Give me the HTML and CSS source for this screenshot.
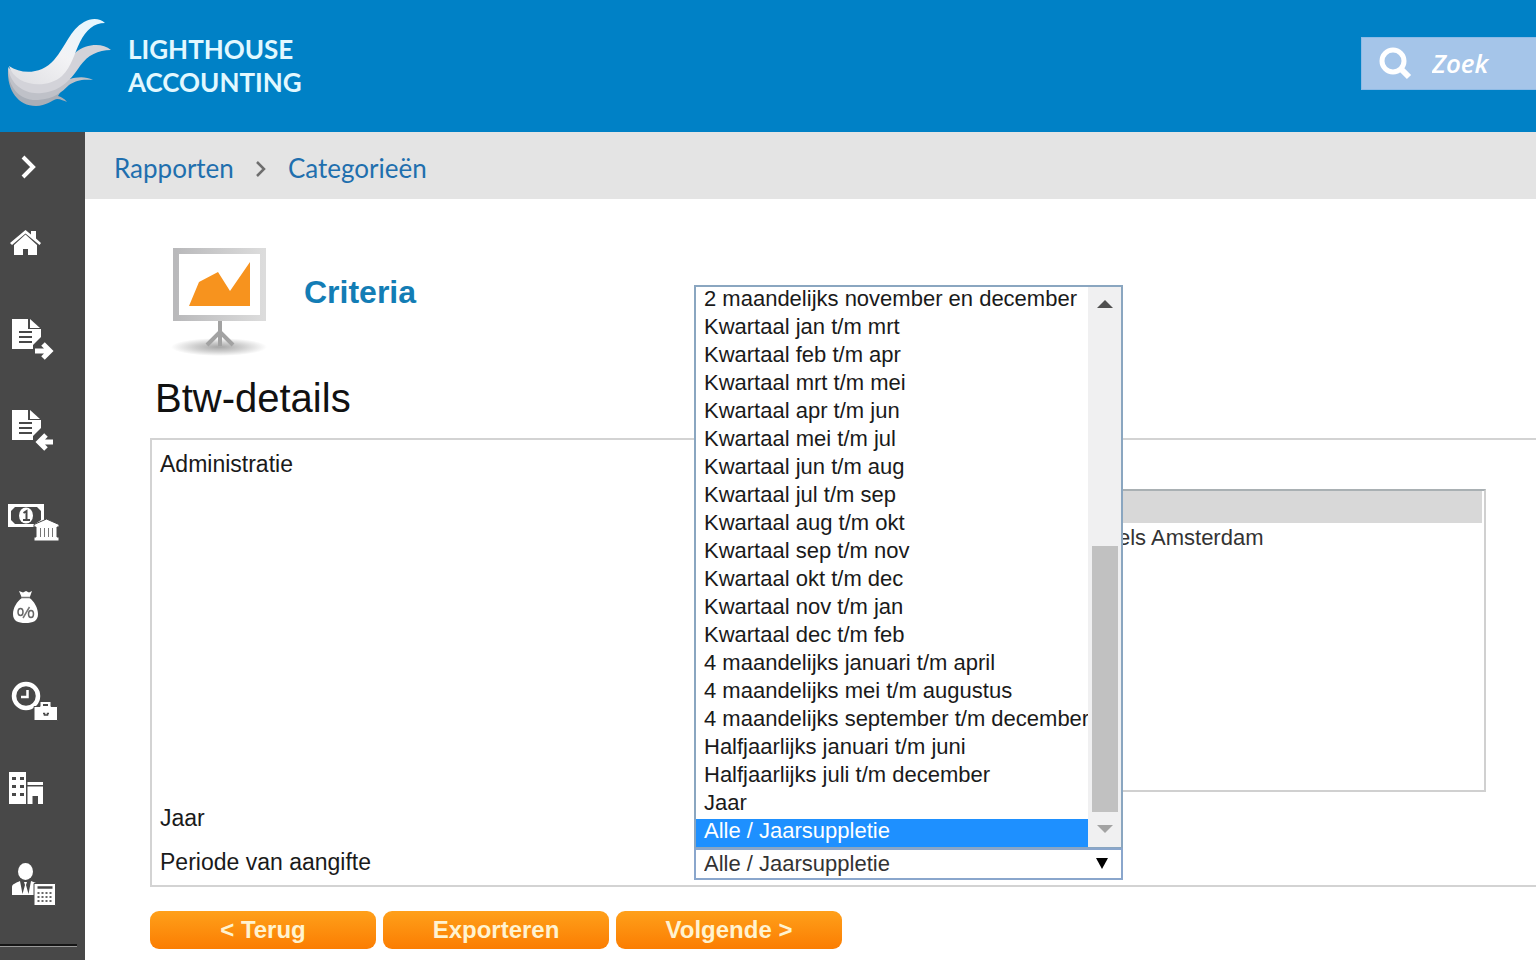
FILE: index.html
```html
<!DOCTYPE html>
<html lang="nl">

<head>
    <meta charset="UTF-8" />
    <meta name="viewport" content="width=device-width, initial-scale=1.0" />
    <title>Lighthouse Accounting - Btw-details</title>
    <link rel="stylesheet" href="styles.css">
</head>

<body>

    <header class="header">
        <a class="logo" href="#">
            <svg class="logo-img" width="120" height="132" viewBox="0 0 120 132" aria-hidden="true">
                <defs>
                    <linearGradient id="wing" x1="0" y1="1" x2="1" y2="0">
                        <stop offset="0" stop-color="#dedee2" />
                        <stop offset=".5" stop-color="#f3f3f5" />
                        <stop offset="1" stop-color="#e4f6ff" />
                    </linearGradient>
                </defs>
                <path fill="#a9aeb7" d="M8 70C7 90 18 106 36 106C46 106 52 100 57 99C61 99 64 101 67 102C64 98 61 97 58 96L64 86C46 96 20 92 8 70Z" />
                <path fill="#bfc1c8" d="M8 68C8 88 20 101 38 100C54 99 62 92 69 85C76 80 83 79 93 80C86 76 76 77 70 79L66 74C50 90 22 88 8 68Z" />
                <path fill="#d3d3d9" d="M8 67C10 84 24 95 42 93C62 91 72 78 80 66C88 55 98 50 111 50C102 42 86 44 76 52L62 68C46 84 22 82 8 67Z" />
                <path fill="url(#wing)" d="M9 66C22 75 42 74 54 60C66 46 70 30 84 22C91 18 100 18 105 23C94 23 86 30 80 42C74 54 72 66 62 76C46 90 15 86 9 66Z" />
            </svg>
            <span class="logo-text">LIGHTHOUSE<br>ACCOUNTING</span>
        </a>
        <label class="search">
            <svg width="36" height="36" viewBox="0 0 36 36" aria-hidden="true">
                <circle cx="15" cy="15" r="11" fill="none" stroke="#fff" stroke-width="5" />
                <path d="M23 23L31 31" stroke="#fff" stroke-width="6" />
            </svg>
            <input class="search-input" type="search" placeholder="Zoek" aria-label="Zoek">
        </label>
    </header>

    <div class="page">
        <nav class="sidebar">
            <button class="side-toggle" type="button" aria-label="Menu">
                <svg width="60" height="68" viewBox="0 0 60 68">
                    <path d="M23 25L33 35L23 45" fill="none" stroke="#fff" stroke-width="4" />
                </svg>
            </button>
            <a class="side-link" href="#" aria-label="Home">
                <svg width="60" height="91" viewBox="0 0 60 91">
                    <path fill="#fff" d="M10 43L25.500 30L31 34.500V31H36V38.500L41 43L39.500 45L25.500 33.500L12 45Z" />
                    <path fill="#fff" d="M14 45L25.500 34.500L37 45V55H28V49H23V55H14Z" />
                </svg>
            </a>
            <a class="side-link" href="#" aria-label="Verkoop">
                <svg width="60" height="91" viewBox="0 0 60 91">
                    <path fill="#fff" d="M12 28H28V38H41V46L33 54V58H12Z" />
                    <path fill="#fff" d="M30 28L40 37H30Z" />
                    <path d="M19 41H32M19 46H32M19 51H32" stroke="#484848" stroke-width="2" />
                    <path d="M35 60H49M43 53L50 60L43 67" fill="none" stroke="#fff" stroke-width="5" />
                </svg>
            </a>
            <a class="side-link" href="#" aria-label="Inkoop">
                <svg width="60" height="91" viewBox="0 0 60 91">
                    <path fill="#fff" d="M12 28H28V38H41V46L33 54V58H12Z" />
                    <path fill="#fff" d="M30 28L40 37H30Z" />
                    <path d="M19 41H32M19 46H32M19 51H32" stroke="#484848" stroke-width="2" />
                    <path d="M53 60H40M46 53L39 60L46 67" fill="none" stroke="#fff" stroke-width="5" />
                </svg>
            </a>
            <a class="side-link" href="#" aria-label="Bank">
                <svg width="60" height="91" viewBox="0 0 60 91">
                    <path fill="#fff" d="M8 31H44V48L34 54H8Z" />
                    <path fill="#484848" d="M15 34H37L41 38V47L35 51H15L11 47V38Z" />
                    <ellipse cx="26" cy="42.500" rx="7" ry="8" fill="#fff" />
                    <path d="M23.500 40L26.500 38V47M23 47H30" fill="none" stroke="#484848" stroke-width="2" />
                    <path fill="#fff" stroke="#484848" d="M46.500 46L59 51.500V54H57V64H59V68H34V64H36V54H34V51.500Z" />
                    <path d="M40.500 55V64M44.500 55V64M48.500 55V64M52.500 55V64" stroke="#777" stroke-width="1" />
                </svg>
            </a>
            <a class="side-link" href="#" aria-label="Btw">
                <svg width="60" height="91" viewBox="0 0 60 91">
                    <path fill="#fff" d="M19 27L23 28.500L26 27L29 28.500L32 27L29.500 34C34 37 38 44 38 50C38 57 33 59 25.500 59C18 59 13 57 13 50C13 44 17 37 22 34Z" />
                    <path d="M22 33.500H30M29.500 43L23 54" stroke="#777" stroke-width="1.500" />
                    <ellipse cx="20.500" cy="48" rx="2.500" ry="3.500" fill="none" stroke="#666" stroke-width="1.500" />
                    <ellipse cx="31" cy="50" rx="2.500" ry="3.500" fill="none" stroke="#666" stroke-width="1.500" />
                </svg>
            </a>
            <a class="side-link" href="#" aria-label="Uren">
                <svg width="60" height="91" viewBox="0 0 60 91">
                    <circle cx="26" cy="41" r="12" fill="none" stroke="#fff" stroke-width="4.500" />
                    <path d="M27.500 35V42H21" fill="none" stroke="#fff" stroke-width="2.500" />
                    <path fill="#fff" stroke="#484848" d="M34 51.500H40V46.500H51V51.500H57.500V65.500H34Z" />
                    <path d="M43 50H48" stroke="#484848" stroke-width="2" />
                    <path d="M43 58.500H44.500V60H47.500V58.500H49" fill="none" stroke="#484848" stroke-width="1.500" />
                </svg>
            </a>
            <a class="side-link" href="#" aria-label="Activa">
                <svg width="60" height="91" viewBox="0 0 60 91">
                    <path fill="#fff" d="M9 26H26V58H9ZM27.500 36H43V39H27.500ZM27.500 40.500H43V58H38V50H32.500V58H27.500Z" />
                    <path fill="#484848" d="M12 31H16V34H12ZM20 31H24V34H20ZM12 39H16V42H12ZM20 39H24V42H20ZM12 47H16V50H12ZM20 47H24V50H20Z" />
                </svg>
            </a>
            <a class="side-link" href="#" aria-label="Accountant">
                <svg width="60" height="91" viewBox="0 0 60 91">
                    <ellipse cx="25.500" cy="34.500" rx="7.500" ry="8.500" fill="#fff" />
                    <path fill="#fff" d="M12 58V50C12 47 16 46 20 44L22.500 57L25 48L24 45H27L26 48L28.500 57L31 44L36 46V58Z" />
                    <path fill="#fff" stroke="#484848" d="M34 46.500H55.500V68.500H34Z" />
                    <path d="M37.500 50.500H52.500" stroke="#484848" stroke-width="2.500" />
                    <path d="M37.500 56H52.500M37.500 60H52.500M37.500 64H52.500" stroke="#666" stroke-width="2" stroke-dasharray="2 2" />
                </svg>
            </a>
            <hr class="side-line">
        </nav>

        <main class="main">
            <nav class="breadcrumb">
                <a href="#">Rapporten</a>
                <svg width="12" height="20" viewBox="0 0 12 20" aria-hidden="true">
                    <path d="M2 4L9 11L2 18" fill="none" stroke="#6e6e6e" stroke-width="2.500" />
                </svg>
                <a href="#">Categorieën</a>
            </nav>

            <form class="content">
                <div class="criteria">
                    <svg width="100" height="112" viewBox="0 0 100 112" aria-hidden="true">
                        <defs>
                            <linearGradient id="frame">
                                <stop offset="0" stop-color="#b9b9bb" />
                                <stop offset="1" stop-color="#dcdcdc" />
                            </linearGradient>
                            <radialGradient id="shadow">
                                <stop offset="0" stop-color="#a6a6a6" />
                                <stop offset=".5" stop-color="#cfcfcf" />
                                <stop offset="1" stop-color="#fff" />
                            </radialGradient>
                        </defs>
                        <ellipse cx="49" cy="99" rx="48" ry="9" fill="url(#shadow)" />
                        <rect x="6" y="3" width="87" height="67" fill="#fff" stroke="url(#frame)" stroke-width="6" />
                        <path fill="#f7931e" d="M19 58L29 34L48 24L60 43L80 14V58Z" />
                        <path d="M50 73V98M50 84L37 97M50 84L63 97" fill="none" stroke="#a2a2a2" stroke-width="4" />
                    </svg>
                    <h2 class="criteria-title">Criteria</h2>
                </div>

                <h1 class="title">Btw-details</h1>

                <div class="panel">
                    <div class="row">
                        <label class="row-label" for="administratie">Administratie</label>
                        <div class="row-field row-field-admin">
                            <select class="admin-list" id="administratie" size="9">
                                <option class="admin-head"></option>
                                <option class="admin-item">els Amsterdam</option>
                            </select>
                        </div>
                    </div>
                    <div class="row">
                        <span class="row-label">Jaar</span>
                    </div>
                    <div class="row">
                        <label class="row-label" for="periode">Periode van aangifte</label>
                        <div class="row-field">
                            <div class="period">
                                <select class="period-select" id="periode">
                                    <option>Alle / Jaarsuppletie</option>
                                </select>
                                <div class="dropdown">
                                    <ul class="dropdown-list" role="listbox" aria-label="Periode van aangifte">
                                        <li role="option">2 maandelijks november en december</li>
                                        <li role="option">Kwartaal jan t/m mrt</li>
                                        <li role="option">Kwartaal feb t/m apr</li>
                                        <li role="option">Kwartaal mrt t/m mei</li>
                                        <li role="option">Kwartaal apr t/m jun</li>
                                        <li role="option">Kwartaal mei t/m jul</li>
                                        <li role="option">Kwartaal jun t/m aug</li>
                                        <li role="option">Kwartaal jul t/m sep</li>
                                        <li role="option">Kwartaal aug t/m okt</li>
                                        <li role="option">Kwartaal sep t/m nov</li>
                                        <li role="option">Kwartaal okt t/m dec</li>
                                        <li role="option">Kwartaal nov t/m jan</li>
                                        <li role="option">Kwartaal dec t/m feb</li>
                                        <li role="option">4 maandelijks januari t/m april</li>
                                        <li role="option">4 maandelijks mei t/m augustus</li>
                                        <li role="option">4 maandelijks september t/m december</li>
                                        <li role="option">Halfjaarlijks januari t/m juni</li>
                                        <li role="option">Halfjaarlijks juli t/m december</li>
                                        <li role="option">Jaar</li>
                                        <li class="active" role="option" aria-selected="true">Alle / Jaarsuppletie</li>
                                    </ul>
                                    <div class="scrollbar">
                                        <span class="arrow-up"></span>
                                        <span class="thumb"></span>
                                        <span class="arrow-down"></span>
                                    </div>
                                </div>
                            </div>
                        </div>
                    </div>
                </div>

                <div class="buttons">
                    <button class="btn" type="button">&lt; Terug</button>
                    <button class="btn" type="button">Exporteren</button>
                    <button class="btn" type="button">Volgende &gt;</button>
                </div>
            </form>
        </main>
    </div>

</body>

</html>
```

FILE: styles.css
```css
* {
    box-sizing: border-box;
}

body {
    font-family: "Liberation Sans", Arial, sans-serif;
    font-size: 22px;
    line-height: 28px;
    margin: 0;
    min-height: 100vh;
    display: flex;
    flex-direction: column;
    color: #1a1a1a;
    background: #fff;
    overflow-x: hidden;
}

a {
    text-decoration: none;
}

svg {
    display: block;
    flex: none;
}

/* header */
.header {
    display: flex;
    align-items: center;
    justify-content: space-between;
    height: 132px;
    background: #0081c6;
}

.logo {
    display: flex;
    align-items: center;
    gap: 8px;
    color: #e2f8ff;
}

.logo-text {
    font-family: Lato, sans-serif;
    font-size: 26px;
    font-weight: bold;
    line-height: 33px;
}

.search {
    display: flex;
    align-items: center;
    width: 175px;
    height: 53px;
    margin-bottom: 5px;
    padding-left: 16px;
    gap: 18px;
    background: #a5c5e9;
    border: 1px solid #8dbbe6;
    border-right: 0;
}

.search-input {
    flex: 1;
    min-width: 0;
    padding: 0 0 2px;
    border: 0;
    outline: 0;
    background: none;
    color: #fff;
    font-family: "Open Sans", sans-serif;
    font-size: 26px;
    font-style: italic;
    font-weight: 600;
}

.search-input::placeholder {
    color: #fff;
}

.page {
    display: flex;
    flex: 1;
}

/* sidebar */
.sidebar {
    flex: 0 0 85px;
    background: #484848;
}

.side-toggle {
    display: block;
    padding: 0;
    border: 0;
    background: none;
}

.side-link {
    display: block;
}

.side-line {
    width: 77px;
    margin: 16px 0 0;
    border: 0;
    border-top: 2px solid #151515;
    border-bottom: 1px solid #999;
}

/* content */
.main {
    flex: 1;
    min-width: 0;
}

.breadcrumb {
    display: flex;
    align-items: center;
    gap: 21px;
    height: 67px;
    padding: 4px 29px 0;
    background: #e4e4e4;
    font-family: Lato, sans-serif;
    font-size: 26px;
}

.breadcrumb a {
    color: #1f6fae;
}

.content {
    padding: 49px 0 12px 65px;
}

.criteria {
    display: flex;
    gap: 34px;
    padding-left: 20px;
}

.criteria-title {
    margin: 27px 0 0;
    font-size: 32px;
    line-height: 34px;
    color: #137db5;
}

.title {
    margin: 15px 0 17px;
    padding-left: 5px;
    font-size: 40px;
    font-weight: normal;
    line-height: 46px;
    color: #111;
}

.panel {
    display: flex;
    flex-direction: column;
    gap: 12px;
    padding: 10px 0 5px 8px;
    border: 2px solid #d3d3d3;
    border-right: 0;
}

.row {
    display: flex;
    min-height: 32px;
}

.row-label {
    flex: 0 0 534px;
    font-size: 23px;
}

.row-field {
    flex: 1;
    min-width: 0;
}

.row-field-admin {
    padding: 39px 50px 0 0;
}

.admin-list {
    display: block;
    width: 100%;
    height: 303px;
    padding: 0 2px;
    border: 2px solid #d0d0d0;
    border-top-color: #a9b0b3;
    border-radius: 0;
    outline: 0;
    background: #fff;
    color: #333;
    font: inherit;
    overflow: hidden;
}

.admin-head {
    min-height: 32px;
    background: #d8d8d8;
}

.admin-item {
    padding: 2px 0 2px 420px;
    line-height: 28px;
}

/* period select with its open list */
.period {
    position: relative;
    width: 429px;
}

.period-select {
    display: block;
    width: 100%;
    height: 32px;
    padding: 0 8px;
    border: 2px solid #8aa6cc;
    border-radius: 0;
    outline: 0;
    appearance: none;
    background: #fff;
    color: #333;
    font: inherit;
}

.period::after {
    content: "";
    position: absolute;
    top: 10px;
    right: 15px;
    border: 6px solid transparent;
    border-top: 11px solid #000;
    border-bottom: 0;
}

.dropdown {
    position: absolute;
    left: 0;
    right: 0;
    bottom: 100%;
    display: flex;
    border: 2px solid #8aa6c0;
    border-bottom-width: 1px;
    background: #fff;
}

.dropdown-list {
    flex: 1;
    min-width: 0;
    margin: 0;
    padding: 0;
    list-style: none;
    white-space: nowrap;
}

.dropdown-list li {
    padding: 0 0 4px 8px;
    line-height: 24px;
}

.dropdown-list .active {
    background: #1e90ff;
    color: #fff;
}

.scrollbar {
    display: flex;
    flex: none;
    flex-direction: column;
    align-items: center;
    width: 33px;
    padding: 13px 0 14px;
    background: #f0f0f1;
}

.arrow-up {
    border: 8px solid transparent;
    border-top: 0;
    border-bottom-color: #505050;
}

.thumb {
    width: 26px;
    height: 266px;
    margin: auto 0 13px;
    background: #c1c1c1;
}

.arrow-down {
    border: 8px solid transparent;
    border-bottom: 0;
    border-top-color: #a3a3a3;
}

/* buttons */
.buttons {
    display: flex;
    gap: 7px;
    margin-top: 24px;
}

.btn {
    width: 226px;
    height: 38px;
    padding: 0;
    border: 0;
    border-radius: 9px;
    background: linear-gradient(#ffa01a, #fb7d02);
    color: #fff3d0;
    font-family: inherit;
    font-size: 24px;
    font-weight: bold;
}
```
